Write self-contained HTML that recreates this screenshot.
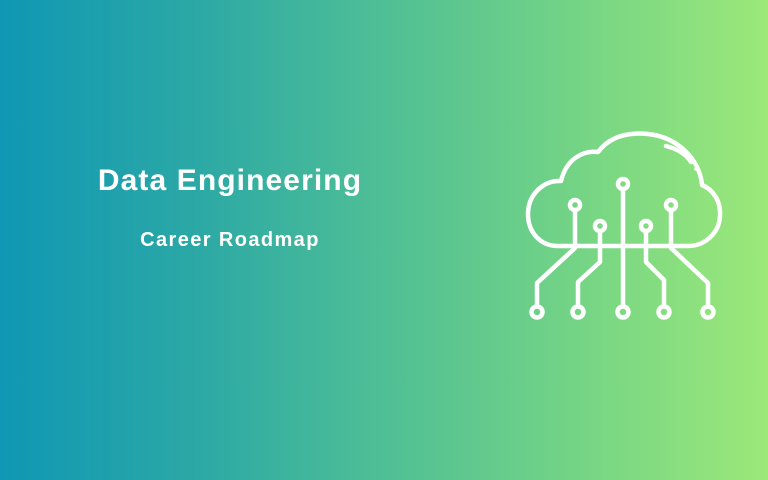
<!DOCTYPE html>
<html><head><meta charset="utf-8"><style>
html,body{margin:0;padding:0}
body{width:768px;height:480px;overflow:hidden;position:relative;
background:linear-gradient(90deg,#0f97b4 0%,#2ba8a6 25%,#4fbf95 50%,#74d485 75%,#9ce879 100%);
font-family:"Liberation Sans",sans-serif;color:#fff}
.t{position:absolute;left:0;width:460px;text-align:center;font-weight:bold;white-space:nowrap}
.t1{top:164px;font-size:30px;letter-spacing:1.1px}
.t2{top:229px;font-size:20px;letter-spacing:1.4px}
svg{position:absolute;left:0;top:0}
</style></head><body>
<div class="t t1">Data Engineering</div>
<div class="t t2">Career Roadmap</div>
<svg width="768" height="480" fill="none" stroke="#fff" stroke-width="4.5" stroke-linecap="round" stroke-linejoin="round">
<path d="M688 246 H558 C540 246 528 232 528 214 C528 195 543 180 561 181 C566 160 582 150 598 152 C610 136 628 132 648 134 C678 137 700 160 702 185 C714 190 721 202 720 216 C719 234 704 246 688 246"/>
<path d="M666 146 C678 149 687 155 691 162"/>
<circle cx="696" cy="169" r="1.8" fill="#fff" stroke="none"/>
<circle cx="623" cy="184" r="5"/>
<circle cx="575" cy="205" r="5"/>
<circle cx="671" cy="205" r="5"/>
<circle cx="600" cy="226" r="5"/>
<circle cx="646" cy="226" r="5"/>
<circle cx="537" cy="312" r="5.5"/>
<circle cx="578" cy="312" r="5.5"/>
<circle cx="623" cy="312" r="5.5"/>
<circle cx="664" cy="312" r="5.5"/>
<circle cx="708" cy="312" r="5.5"/>
<path d="M623 189 V306.5"/>
<path d="M575 210 V248 L537 283 V306.5"/>
<path d="M600 231 V262 L578 282 V306.5"/>
<path d="M671 210 V248 L708 283 V306.5"/>
<path d="M646 231 V262 L664 280 V306.5"/>
</svg>
</body></html>
